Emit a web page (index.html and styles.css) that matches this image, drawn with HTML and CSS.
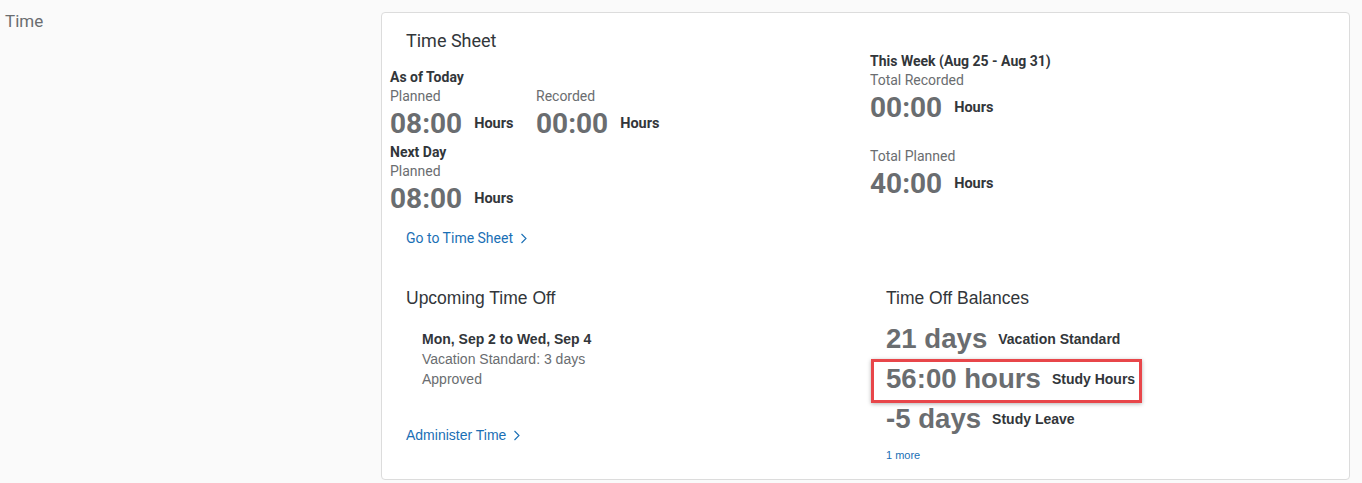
FILE: index.html
```html
<!DOCTYPE html>
<html lang="en">
<head>
<meta charset="utf-8">
<title>Time</title>
<link rel="stylesheet" href="styles.css">
</head>
<body>
<div class="section">
  <div class="section-title">Time</div>
  <div class="card">
    <div class="col ts-left">
      <h2 class="heading">Time Sheet</h2>
      <div class="label-strong mt-as">As of Today</div>
      <div class="pair">
        <div>
          <div class="label">Planned</div>
          <div class="metric"><span class="num">08:00</span><span class="unit">Hours</span></div>
        </div>
        <div>
          <div class="label">Recorded</div>
          <div class="metric"><span class="num">00:00</span><span class="unit">Hours</span></div>
        </div>
      </div>
      <div class="label-strong mt-next">Next Day</div>
      <div class="label">Planned</div>
      <div class="metric"><span class="num">08:00</span><span class="unit">Hours</span></div>
      <a class="link ts-link" href="#">Go to Time Sheet <span class="chev"><svg width="8" height="11" viewBox="0 0 8 11"><path d="M1.5 1 L6 5.5 L1.5 10" fill="none" stroke="currentColor" stroke-width="1.1"/></svg></span></a>
    </div>
    <div class="col ts-right">
      <div class="label-strong">This Week (Aug 25 - Aug 31)</div>
      <div class="label">Total Recorded</div>
      <div class="metric"><span class="num">00:00</span><span class="unit">Hours</span></div>
      <div class="label mt-planned">Total Planned</div>
      <div class="metric"><span class="num">40:00</span><span class="unit">Hours</span></div>
    </div>
    <div class="col off-left">
      <h2 class="heading heading2">Upcoming Time Off</h2>
      <div class="leave">
        <div class="leave-date">Mon, Sep 2 to Wed, Sep 4</div>
        <div class="leave-text">Vacation Standard: 3 days</div>
        <div class="leave-text">Approved</div>
      </div>
      <a class="link link2 admin-link" href="#">Administer Time <span class="chev"><svg width="8" height="11" viewBox="0 0 8 11"><path d="M1.5 1 L6 5.5 L1.5 10" fill="none" stroke="currentColor" stroke-width="1.1"/></svg></span></a>
    </div>
    <div class="col off-right">
      <h2 class="heading heading2">Time Off Balances</h2>
      <div class="balances">
        <div class="bal"><span class="bal-num">21 days</span><span class="bal-label">Vacation Standard</span></div>
        <div class="bal highlight"><span class="bal-num">56:00 hours</span><span class="bal-label">Study Hours</span></div>
        <div class="bal"><span class="bal-num">-5 days</span><span class="bal-label">Study Leave</span></div>
      </div>
      <a class="more" href="#">1 more</a>
    </div>
  </div>
</div>
</body>
</html>
```

FILE: styles.css
```css
* { box-sizing: border-box; }
html, body { margin: 0; padding: 0; }
body {
  background: #fafafa;
  font-family: Roboto, "Liberation Sans", Arial, sans-serif;
  color: #32363a;
  width: 1362px;
  height: 483px;
  overflow: hidden;
}
.section {
  display: grid;
  grid-template-columns: 381px 969px;
  padding-top: 12px;
}
.section-title {
  font-size: 17px;
  line-height: 24px;
  color: #6a6d70;
  padding-left: 5px;
  margin-top: -3px;
}
.card {
  background: #fff;
  border: 1px solid #dcdcdc;
  border-radius: 4px;
  height: 468px;
  padding: 0 8px;
  display: grid;
  grid-template-columns: 480px 1fr;
  grid-template-rows: auto auto;
  align-content: start;
}
.col { display: flex; flex-direction: column; align-items: flex-start; }
.heading {
  margin: 0;
  font-weight: 400;
  font-size: 18px;
  line-height: 24px;
  color: #32363a;
  padding-left: 16px;
}
.ts-left { padding-top: 16px; }
.ts-right { padding-top: 39px; }
.label-strong {
  font-size: 14px;
  font-weight: 700;
  line-height: 19px;
  color: #32363a;
}
.label {
  font-size: 14px;
  line-height: 19px;
  color: #6a6d70;
}
.mt-as { margin-top: 15px; }
.mt-next { margin-top: 2px; }
.mt-planned { margin-top: 22px; }
.pair {
  display: grid;
  grid-template-columns: 146px auto;
}
.metric {
  display: flex;
  align-items: center;
  gap: 12px;
  height: 35px;
  line-height: 35px;
}
.num {
  font-size: 28px;
  font-weight: 700;
  color: #6a6d70;
}
.unit {
  font-size: 14.5px;
  font-weight: 700;
  color: #32363a;
  line-height: 20px;
  padding-top: 1px;
}
.link {
  color: #1a6fb5;
  text-decoration: none;
  font-size: 14px;
  line-height: 19px;
  padding-left: 16px;
  display: inline-flex;
  align-items: center;
  gap: 7px;
}
.chev { display: inline-flex; }
.ts-link { margin-top: 13px; }

.off-left, .off-right {
  font-family: "Liberation Sans", Arial, sans-serif;
  padding-top: 38px;
}
.heading2 {
  font-family: "Liberation Sans", Arial, sans-serif;
  font-size: 17.5px;
}
.leave {
  padding-left: 32px;
  margin-top: 19px;
}
.leave-date {
  font-size: 14px;
  font-weight: 700;
  line-height: 20px;
  color: #32363a;
}
.leave-text {
  font-size: 14px;
  line-height: 20px;
  color: #6a6d70;
}
.link2 { font-family: "Liberation Sans", Arial, sans-serif; line-height: 20px; gap: 7px; }
.admin-link { margin-top: 36px; }
.balances {
  padding-left: 16px;
  margin-top: 9px;
  display: flex;
  flex-direction: column;
  align-items: flex-start;
}
.bal {
  display: inline-flex;
  align-items: center;
  gap: 11px;
  height: 40px;
  line-height: 40px;
  position: relative;
}
.bal-num {
  font-size: 27.6px;
  font-weight: 700;
  color: #6a6d70;
}
.bal-label {
  font-size: 14px;
  font-weight: 700;
  color: #32363a;
  line-height: 20px;
}
.highlight::after {
  content: "";
  position: absolute;
  left: -15px;
  right: -7px;
  top: 0;
  bottom: -4px;
  border: 3px solid #e8464a;
  box-shadow: 0 1px 4px rgba(0,0,0,0.3);
}
.more {
  margin-top: 8px;
  padding-left: 16px;
  font-size: 11px;
  line-height: 16px;
  color: #1a6fb5;
  text-decoration: none;
}
```
